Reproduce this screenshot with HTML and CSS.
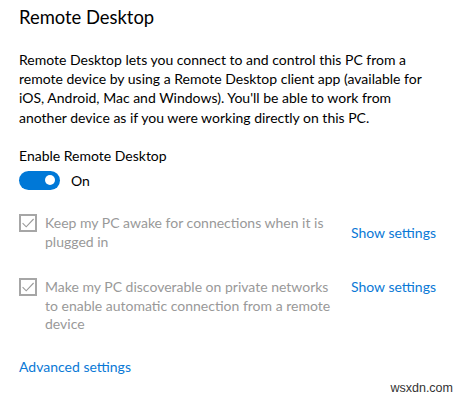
FILE: index.html
```html
<!DOCTYPE html>
<html>
<head>
<meta charset="utf-8">
<link rel="stylesheet" href="styles.css">
</head>
<body>
<div class="page">
  <h1 class="title">Remote Desktop</h1>
  <p class="desc">Remote Desktop lets you connect to and control this PC from a remote device by using a Remote Desktop client app (available for iOS, Android, Mac and Windows). You'll be able to work from another device as if you were working directly on this PC.</p>
  <div class="label">Enable Remote Desktop</div>
  <div class="toggle-row">
    <span class="toggle"><span class="knob"></span></span>
    <span class="toggle-text">On</span>
  </div>
  <div class="option first">
    <span class="check"><svg viewBox="0 0 18 18" width="18" height="18"><path d="M3.6 9.2 L7.2 12.8 L14.6 5" fill="none" stroke="#9a9a9a" stroke-width="1.1"/></svg></span>
    <span class="opt-text">Keep my PC awake for connections when it is plugged in</span>
    <a class="link show">Show settings</a>
  </div>
  <div class="option second">
    <span class="check"><svg viewBox="0 0 18 18" width="18" height="18"><path d="M3.6 9.2 L7.2 12.8 L14.6 5" fill="none" stroke="#9a9a9a" stroke-width="1.1"/></svg></span>
    <span class="opt-text">Make my PC discoverable on private networks to enable automatic connection from a remote device</span>
    <a class="link show">Show settings</a>
  </div>
  <a class="link adv">Advanced settings</a>
</div>
<div class="watermark">wsxdn.com</div>
</body>
</html>
```
FILE: styles.css
```css
html, body { margin: 0; padding: 0; background: #fff; }
body { font-family: "Lato", "Open Sans", sans-serif; color: #000; width: 464px; height: 396px; overflow: hidden; position: relative; }
.page { padding: 5px 0 0 19px; }
.title { font-size: 18.4px; font-weight: 400; margin: 0; line-height: 24px; }
.desc { font-size: 14px; line-height: 19.2px; margin: 21px 0 0 0; width: 412px; }
.label { font-size: 14px; line-height: 19px; margin-top: 19px; }
.toggle-row { display: flex; align-items: center; margin-top: 6px; height: 19px; }
.toggle { width: 41px; height: 19px; border-radius: 10px; background: #0078d7; position: relative; flex: none; }
.knob { position: absolute; right: 5px; top: 4.5px; width: 10px; height: 10px; border-radius: 50%; background: #fff; }
.toggle-text { font-size: 14px; line-height: 19px; margin-left: 11px; }
.option { display: flex; align-items: flex-start; }
.option.first { margin-top: 24px; }
.option.second { margin-top: 26px; }
.check { width: 18px; height: 18px; border: 2px solid #a6a6a6; box-sizing: border-box; flex: none; display: flex; margin-top: 0; }
.check svg { margin: -2px; flex: none; }
.opt-text { font-size: 14px; line-height: 18.6px; color: #999; width: 296px; margin-left: 8px; margin-top: 0.5px; }
.link { color: #0a79d6; font-size: 14px; }
.show { margin-left: 10px; margin-top: 9.5px; line-height: 19px; white-space: nowrap; }
.second .show { margin-top: -0.5px; }
.adv { display: block; margin-top: 23px; line-height: 19px; }
.watermark { position: absolute; right: 11px; bottom: 1px; font-family: "Liberation Sans", sans-serif; font-size: 12.5px; color: #333; }
```
